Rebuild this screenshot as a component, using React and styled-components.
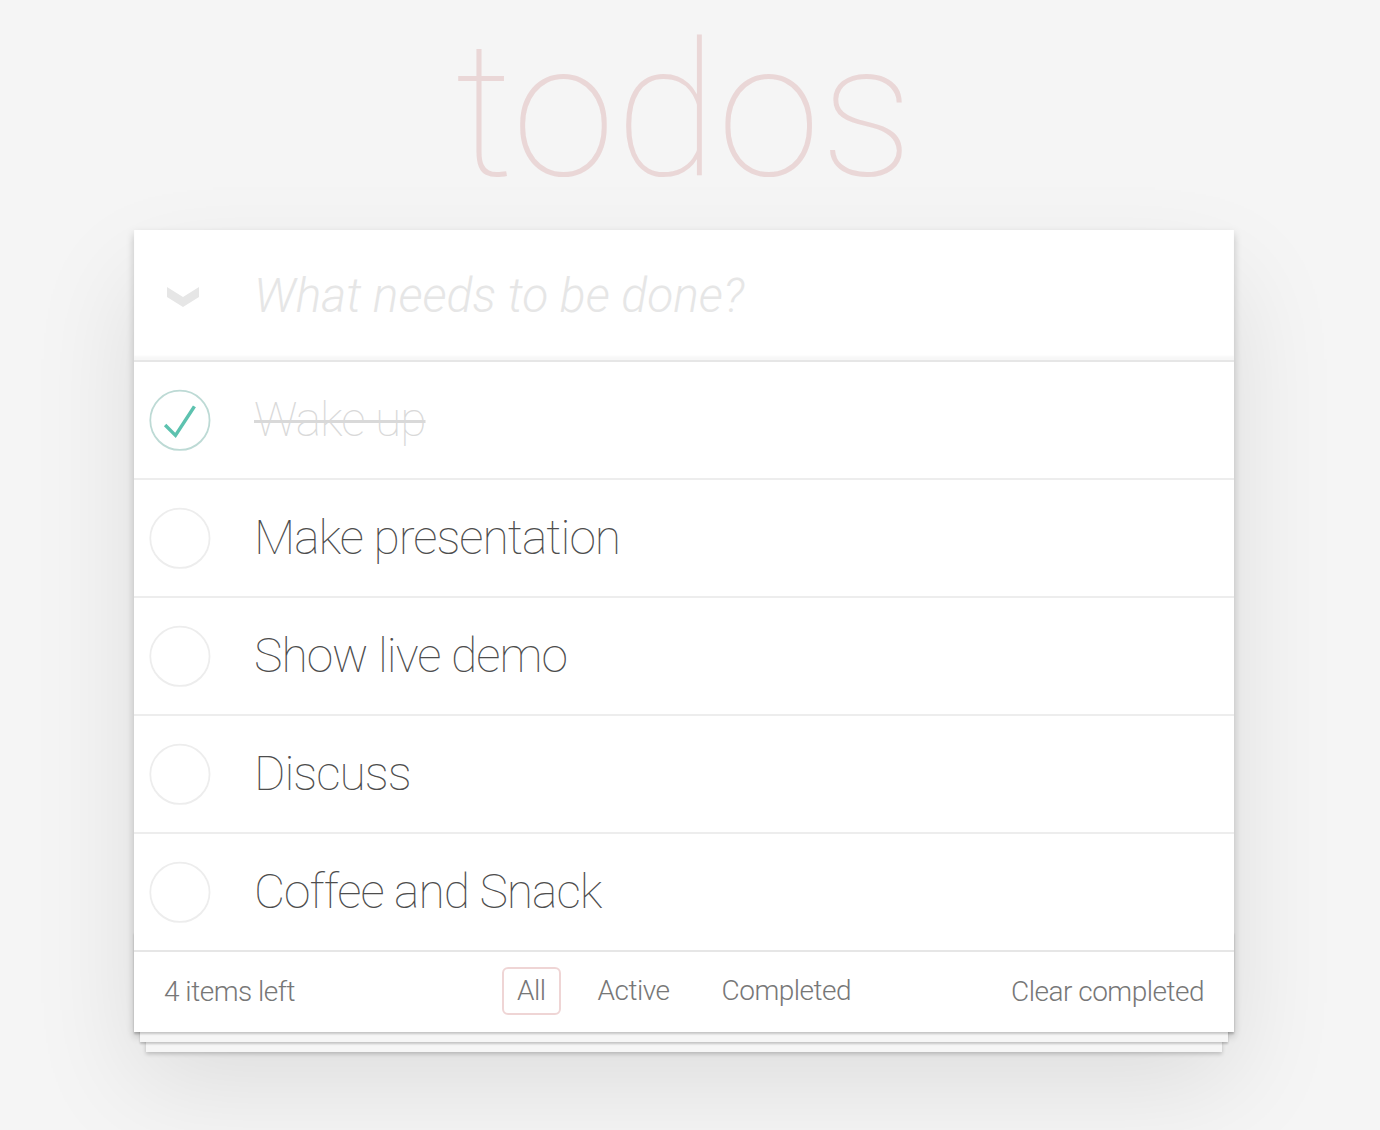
import React from 'react';
import styled, { createGlobalStyle } from 'styled-components';

const GlobalStyle = createGlobalStyle`
  html, body {
    margin: 0;
    padding: 0;
  }
  body {
    background: #f5f5f5;
    color: #4d4d4d;
    font-family: Roboto, 'Liberation Sans', sans-serif;
    font-weight: 300;
    -webkit-font-smoothing: antialiased;
  }
`;

const Page = styled.div`
  box-sizing: border-box;
  min-height: 1130px;
  padding: 0 12px 0 0;
`;

const Title = styled.h1`
  margin: 0 auto;
  width: 1100px;
  height: 230px;
  font-size: 187px;
  font-weight: 100;
  line-height: 223px;
  text-align: center;
  color: rgba(175, 47, 47, 0.15);
`;

const TodoApp = styled.section`
  position: relative;
  width: 1100px;
  margin: 0 auto;
  background: #fff;
  box-shadow: 0 4px 8px 0 rgba(0, 0, 0, 0.2), 0 50px 100px 0 rgba(0, 0, 0, 0.1);
`;

const Header = styled.header`
  position: relative;
  height: 130px;
  display: flex;
  align-items: center;
  box-shadow: inset 0 -4px 2px rgba(0, 0, 0, 0.03);
`;

const ToggleAll = styled.div`
  width: 120px;
  display: flex;
  justify-content: center;
  padding-right: 22px;
  margin-top: 4px;
  box-sizing: border-box;
  svg { display: block; }
`;

const Placeholder = styled.div`
  font-size: 48px;
  font-style: italic;
  font-weight: 300;
  color: #e6e6e6;
  line-height: 67px;
`;

const Main = styled.ul`
  position: relative;
  z-index: 2;
  list-style: none;
  margin: 0;
  padding: 0;
  border-top: 2px solid #e6e6e6;
`;

const Item = styled.li`
  position: relative;
  display: flex;
  align-items: center;
  height: 116px;
  border-bottom: ${p => (p.$last ? 'none' : '2px solid #ededed')};
  background: #fff;
`;

const Toggle = styled.div`
  width: 120px;
  height: 80px;
  display: flex;
  align-items: center;
  svg { display: block; }
`;

const Label = styled.label`
  font-size: 48px;
  font-weight: 270;
  line-height: 56px;
  letter-spacing: -1px;
  color: ${p => (p.$done ? '#d9d9d9' : '#4d4d4d')};
  text-decoration: ${p => (p.$done ? 'line-through' : 'none')};
  text-decoration-thickness: 3px;
`;

const Footer = styled.footer`
  position: relative;
  height: 40px;
  padding: 20px 30px;
  border-top: 2px solid #e6e6e6;
  color: #777;
  font-size: 28px;
  font-weight: 280;
  line-height: 40px;
  letter-spacing: -0.5px;
  display: flex;
  align-items: center;
  justify-content: space-between;

  &::before {
    content: '';
    position: absolute;
    left: 0;
    right: 0;
    bottom: 0;
    height: 100px;
    overflow: hidden;
    box-shadow: 0 2px 2px rgba(0, 0, 0, 0.2),
      0 16px 0 -6px #f6f6f6,
      0 18px 2px -6px rgba(0, 0, 0, 0.2),
      0 32px 0 -12px #f6f6f6,
      0 34px 4px -12px rgba(0, 0, 0, 0.2);
  }
`;

const Count = styled.span`
  position: relative;
`;

const Filters = styled.ul`
  position: absolute;
  left: 0;
  right: 0;
  top: 15px;
  margin: 0;
  padding: 0;
  list-style: none;
  display: flex;
  justify-content: center;
`;

const FilterLink = styled.a`
  display: block;
  margin: 0 11px;
  padding: 2px 13px;
  line-height: 40px;
  color: inherit;
  text-decoration: none;
  border: 2px solid ${p => (p.$selected ? 'rgba(175, 47, 47, 0.2)' : 'transparent')};
  border-radius: 6px;
`;

const Clear = styled.span`
  position: relative;
  z-index: 1;
`;

const Chevron = () => (
  <svg width="32" height="20" viewBox="0 0 32 20">
    <path d="M0 0 L16 10 L32 0 L32 10 L16 20 L0 10 Z" fill="#e6e6e6" />
  </svg>
);

const Check = ({ done }) => (
  <svg width="80" height="80" viewBox="-10 -18 100 135">
    <circle cx="50" cy="50" r="50" fill="none" stroke={done ? '#bddad5' : '#ededed'} strokeWidth="3" />
    {done && <path fill="#5dc2af" d="M72 25L42 71 27 56l-4 4 20 20 34-52z" />}
  </svg>
);

const todos = [
  { text: 'Wake up', done: true },
  { text: 'Make presentation' },
  { text: 'Show live demo' },
  { text: 'Discuss' },
  { text: 'Coffee and Snack' },
];

const App = () => (
  <Page>
    <GlobalStyle />
    <Title>todos</Title>
    <TodoApp>
      <Header>
        <ToggleAll><Chevron /></ToggleAll>
        <Placeholder>What needs to be done?</Placeholder>
      </Header>
      <Main>
        {todos.map((t, i) => (
          <Item key={t.text} $last={i === todos.length - 1}>
            <Toggle><Check done={t.done} /></Toggle>
            <Label $done={t.done}>{t.text}</Label>
          </Item>
        ))}
      </Main>
      <Footer>
        <Count>4 items left</Count>
        <Filters>
          <li><FilterLink $selected>All</FilterLink></li>
          <li><FilterLink>Active</FilterLink></li>
          <li><FilterLink>Completed</FilterLink></li>
        </Filters>
        <Clear>Clear completed</Clear>
      </Footer>
    </TodoApp>
  </Page>
);

export default App;
